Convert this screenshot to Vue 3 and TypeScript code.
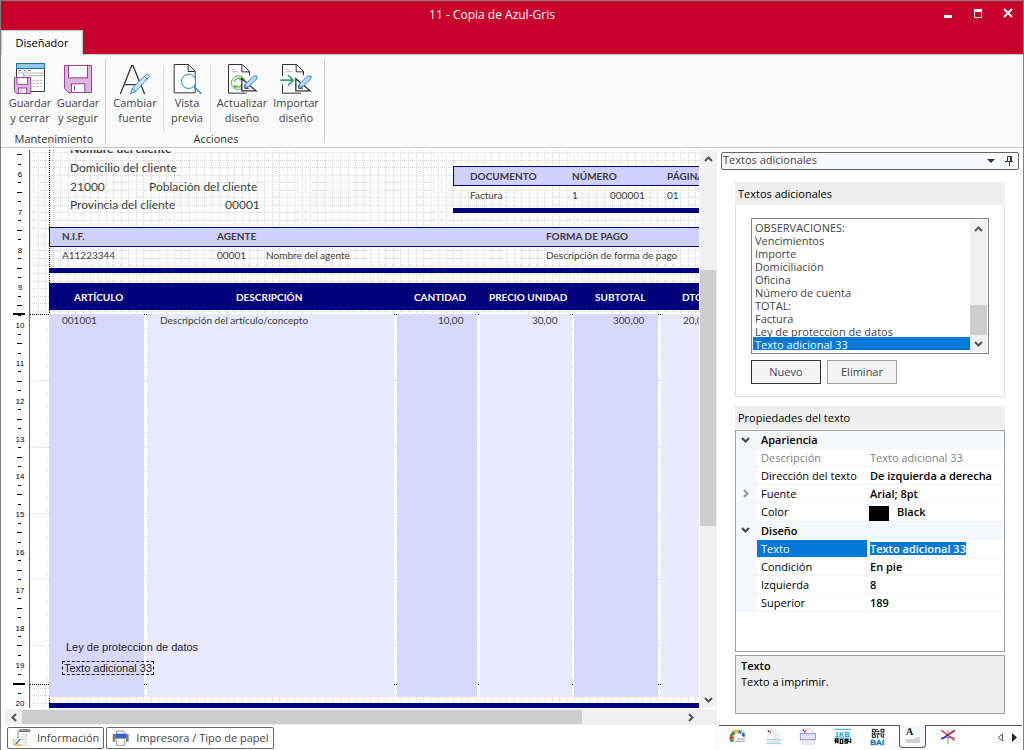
<script setup lang="ts">
import { ref } from 'vue'

interface CanvasText { x: number; y: number; t: string; k: string }

/* Ruler: one centimetre is 37.8 px on screen */
const CM = 37.8
const rulerLabels = Array.from({ length: 15 }, (_, i) => ({ n: i + 6, y: Math.round(23 + i * CM) }))
const ticks: { y: number; w: number }[] = []
for (let i = -3; i < 60; i++) {
  if (i % 4 === 0) continue
  ticks.push({ y: Math.round(23 + (i * CM) / 4), w: i % 2 === 0 ? 5 : 3 })
}
const gridV = Array.from({ length: 160 }, (_, i) => Math.round(i * 7.56))
const gridH = Array.from({ length: 22 }, (_, i) => Math.round(2 + i * 7.56))
const bandLines = [230, 297, 363, 429, 495]

const columns = [
  { x: 19, w: 95, k: 'dark' },
  { x: 117, w: 247, k: 'light' },
  { x: 367, w: 80, k: 'dark' },
  { x: 450, w: 92, k: 'light' },
  { x: 544, w: 84, k: 'dark' },
  { x: 631, w: 95, k: 'light' }
]

const texts: CanvasText[] = [
  { x: 40, y: -9, t: 'Nombre del cliente', k: 'big strong' },
  { x: 40, y: 10, t: 'Domicilio del cliente', k: 'big' },
  { x: 40, y: 29, t: '21000', k: 'big' },
  { x: 119, y: 29, t: 'Población del cliente', k: 'big' },
  { x: 40, y: 47, t: 'Provincia del cliente', k: 'big' },
  { x: 195, y: 47, t: '00001', k: 'big' },
  { x: 440, y: 18, t: 'DOCUMENTO', k: 'strong' },
  { x: 542, y: 18, t: 'NÚMERO', k: 'strong' },
  { x: 637, y: 18, t: 'PÁGINA', k: 'strong' },
  { x: 440, y: 37, t: 'Factura', k: '' },
  { x: 542, y: 37, t: '1', k: '' },
  { x: 580, y: 37, t: '000001', k: '' },
  { x: 637, y: 37, t: '01', k: '' },
  { x: 32, y: 78, t: 'N.I.F.', k: 'strong' },
  { x: 187, y: 78, t: 'AGENTE', k: 'strong' },
  { x: 516, y: 78, t: 'FORMA DE PAGO', k: 'strong' },
  { x: 32, y: 97, t: 'A11223344', k: '' },
  { x: 187, y: 97, t: '00001', k: '' },
  { x: 236, y: 97, t: 'Nombre del agente', k: '' },
  { x: 516, y: 97, t: 'Descripción de forma de pago', k: '' },
  { x: 44, y: 139, t: 'ARTÍCULO', k: 'strong white' },
  { x: 206, y: 139, t: 'DESCRIPCIÓN', k: 'strong white' },
  { x: 384, y: 139, t: 'CANTIDAD', k: 'strong white' },
  { x: 459, y: 139, t: 'PRECIO UNIDAD', k: 'strong white' },
  { x: 565, y: 139, t: 'SUBTOTAL', k: 'strong white' },
  { x: 652, y: 139, t: 'DTO.', k: 'strong white' },
  { x: 32, y: 162, t: '001001', k: '' },
  { x: 130, y: 162, t: 'Descripción del artículo/concepto', k: '' },
  { x: 408, y: 162, t: '10,00', k: '' },
  { x: 502, y: 162, t: '30,00', k: '' },
  { x: 583, y: 162, t: '300,00', k: '' },
  { x: 653, y: 162, t: '20,00', k: '' },
  { x: 36, y: 490, t: 'Ley de proteccion de datos', k: 'arial' },
  { x: 32, y: 511, t: 'Texto adicional 33', k: 'arial picked' }
]

const items = ['OBSERVACIONES:', 'Vencimientos', 'Importe', 'Domiciliación', 'Oficina', 'Número de cuenta', 'TOTAL:', 'Factura', 'Ley de proteccion de datos', 'Texto adicional 33']
const chosen = ref('Texto adicional 33')
const texto = ref('Texto adicional 33')
const paneTabs = ['color', 'pagina', 'cabecera', 'campos', 'qr', 'texto', 'lineas']
const pos = (o: { x: number; y: number }) => ({ left: o.x + 'px', top: o.y + 'px' })
</script>

<template>
  <div class="window">
    <header class="titlebar">
      <h1>11 - Copia de Azul-Gris</h1>
      <button class="tab" type="button">Diseñador</button>
      <div class="winbtns">
        <button type="button" aria-label="Minimizar"><svg width="10" height="12"><rect x="1" y="8" width="8" height="3" fill="#fff" /></svg></button>
        <button type="button" aria-label="Maximizar"><svg width="10" height="12"><path d="M1.500 2v8.500h7V2" fill="none" stroke="#fff" /><rect x="1" y="2" width="8" height="3" fill="#fff" /></svg></button>
        <button type="button" aria-label="Cerrar"><svg width="10" height="12"><path d="M1 2L9 10M9 2L1 10" stroke="#fff" stroke-width="2" /></svg></button>
      </div>
    </header>

    <nav class="ribbon">
      <section class="group">
        <div class="cmds">
          <button type="button" class="cmd w48">
            <svg width="34" height="34" viewBox="39 186 102 102">
              <path d="M49.500 205V274.500H133.500V205" fill="#fff" stroke="#3a3a3a" stroke-width="3" />
              <rect x="49.500" y="190.500" width="84" height="15" fill="#92c7ee" stroke="#1c71b5" stroke-width="3" />
              <path d="M56 212h8M72 212h8M84 212h9" stroke="#777" stroke-width="3" />
              <path d="M52 219h80M71 219v14M71 227h61" fill="none" stroke="#b4b4b4" stroke-width="3" />
              <path d="M97 241h31M97 250h31M97 259h31" stroke="#b4b4b4" stroke-width="3" stroke-dasharray="8 3" />
              <path d="M43.500 232.500H92.500V280.500H50L43.500 274Z" fill="#dcb6dc" stroke="#9d419a" stroke-width="3" />
              <rect x="51" y="233" width="32" height="20" fill="#fff" stroke="#9d419a" stroke-width="3" />
              <rect x="55" y="264" width="25" height="16" fill="#fff" stroke="#9d419a" stroke-width="3" />
              <path d="M63 268v8" stroke="#777" stroke-width="3" />
            </svg>
            <span>Guardar<br>y cerrar</span>
          </button>
          <button type="button" class="cmd w48">
            <svg width="34" height="34" viewBox="180 186 102 102">
              <path d="M190.500 196.500H271.500V277.500H202L190.500 266Z" fill="#dcb6dc" stroke="#9d419a" stroke-width="3" />
              <rect x="202.500" y="196.500" width="57" height="37" fill="#fff" stroke="#9d419a" stroke-width="3" />
              <rect x="211.500" y="251.500" width="40" height="26" fill="#fff" stroke="#9d419a" stroke-width="3" />
              <path d="M221 258v13" stroke="#555" stroke-width="3" />
            </svg>
            <span>Guardar<br>y seguir</span>
          </button>
        </div>
        <h2>Mantenimiento</h2>
      </section>
      <section class="group">
        <div class="cmds">
          <button type="button" class="cmd w56">
            <svg width="34" height="34" viewBox="350 186 102 102">
              <path d="M357 282L391 197H395L430 282M369 254H419" fill="none" stroke="#3a3a3a" stroke-width="4" />
              <path d="M388 281L393 264L434 224C438 220 447 226 442 232L403 274Z" fill="#cfe6f7" stroke="#3089cd" stroke-width="3" />
              <path d="M393 264L403 274M429 229L438 238" stroke="#3089cd" stroke-width="3" />
            </svg>
            <span>Cambiar<br>fuente</span>
          </button>
          <i class="sep"></i>
          <button type="button" class="cmd w46">
            <svg width="34" height="34" viewBox="508 186 102 102">
              <path d="M520.500 193.500H563L583.500 214V278.500H520.500Z" fill="#fff" stroke="#333" stroke-width="3" />
              <path d="M562.500 193.500V214.500H583.500" fill="none" stroke="#333" stroke-width="3" />
              <circle cx="564" cy="244" r="21.500" fill="#fff" stroke="#1d86ca" stroke-width="3" />
              <path d="M580 260L602 281" stroke="#1d86ca" stroke-width="4" />
            </svg>
            <span>Vista<br>previa</span>
          </button>
          <i class="sep"></i>
          <button type="button" class="cmd w62">
            <svg width="34" height="34" viewBox="675 186 102 102">
              <path d="M748 222V214L727 193.500H685.500V279.500H740" fill="#fff" stroke="#333" stroke-width="3" />
              <path d="M725.500 193.500V215.500H748.500V226" fill="none" stroke="#333" stroke-width="3" />
              <path d="M696 209h9M696 215h18" stroke="#bbb" stroke-width="3" />
              <circle cx="715" cy="248" r="20.500" fill="#fff" stroke="#4aa546" stroke-width="3" />
              <path d="M703 246C704 236 716 231 726 238V231M726 239H718M727 250C726 260 714 265 704 258V265M704 258H712" fill="none" stroke="#65b52e" stroke-width="4" />
              <path d="M725.500 236V272.500H768Z" fill="#fff" stroke="#333" stroke-width="4" />
              <path d="M734 255V265H746Z" fill="#fff" stroke="#333" stroke-width="3" />
              <path d="M733 264L738 250L761 228H771V236L747 259Z" fill="#b9dcf5" stroke="#3089cd" stroke-width="3" />
            </svg>
            <span>Actualizar<br>diseño</span>
          </button>
          <button type="button" class="cmd w46">
            <svg width="34" height="34" viewBox="834 186 102 102">
              <path d="M907 222V214L887 193.500H844.500V279.500H900" fill="#fff" stroke="#333" stroke-width="3" />
              <path d="M885.500 193.500V215.500H907.500V226" fill="none" stroke="#333" stroke-width="3" />
              <path d="M856 209h9M856 215h18" stroke="#bbb" stroke-width="3" />
              <path d="M844.500 228v25" stroke="#fff" stroke-width="4" />
              <path d="M838 240.500H876M861 225L877 240.500L861 256" fill="none" stroke="#2fa56a" stroke-width="5" />
              <path d="M884.500 236V272.500H927Z" fill="#fff" stroke="#333" stroke-width="4" />
              <path d="M893 255V265H905Z" fill="#fff" stroke="#333" stroke-width="3" />
              <path d="M892 264L897 250L920 228H930V236L906 259Z" fill="#b9dcf5" stroke="#3089cd" stroke-width="3" />
            </svg>
            <span>Importar<br>diseño</span>
          </button>
        </div>
        <h2>Acciones</h2>
      </section>
    </nav>

    <main class="work">
      <section class="designer">
        <div class="view">
          <svg class="ruler" aria-hidden="true">
            <text v-for="l in rulerLabels" :key="l.n" x="19" :y="l.y + 4">{{ l.n }}</text>
            <rect v-for="t in ticks" :key="t.y" :x="t.w === 5 ? 16 : 17" :y="t.y" :width="t.w" height="1" />
            <rect x="12" y="163" width="12" height="2" />
            <rect x="12" y="533" width="12" height="2" />
          </svg>
          <div class="canvas">
            <svg class="grid" width="100%" height="100%" aria-hidden="true">
              <g fill="none" stroke="#d6d6d6" stroke-dasharray="1 1">
                <line v-for="x in gridV" :key="'a' + x" :x1="x + .5" y1="0" :x2="x + .5" y2="164" />
                <line v-for="x in gridV" :key="'b' + x" :x1="x + .5" y1="535" :x2="x + .5" y2="558" />
                <line v-for="y in gridH" :key="'c' + y" x1="0" :y1="y + .5" x2="100%" :y2="y + .5" />
                <line v-for="y in [538, 545, 553]" :key="'d' + y" x1="0" :y1="y + .5" x2="100%" :y2="y + .5" />
                <line v-for="y in bandLines" :key="'e' + y" x1="0" :y1="y + .5" x2="100%" :y2="y + .5" />
                <line v-for="c in columns" :key="'f' + c.x" :x1="c.x - 1.500" y1="178" :x2="c.x - 1.500" y2="535" stroke-dasharray="1 12" />
              </g>
              <g stroke="#000" stroke-dasharray="1 1">
                <line x1="0" y1="164.500" x2="100%" y2="164.500" />
                <line x1="0" y1="534.500" x2="100%" y2="534.500" />
                <line x1="19.500" y1="0" x2="19.500" y2="100%" />
              </g>
            </svg>
            <div class="box doc"></div>
            <div class="bar docbar"></div>
            <div class="box nif"></div>
            <div class="bar nifbar"></div>
            <div class="bar head"></div>
            <div v-for="c in columns" :key="c.x" class="col" :class="c.k" :style="{ left: c.x + 'px', width: c.w + 'px' }"></div>
            <div class="bar footbar"></div>
            <span v-for="(o, i) in texts" :key="i" class="txt" :class="o.k" :style="pos(o)">{{ o.t }}</span>
          </div>
          <div class="vscroll">
            <button type="button" aria-label="Subir"><svg width="9" height="6"><path d="M1 5L4.500 1.500L8 5" /></svg></button>
            <i class="v1"></i><i class="thumb v2"></i><i class="v3"></i>
            <button type="button" aria-label="Bajar"><svg width="9" height="6"><path d="M1 1L4.500 4.500L8 1" /></svg></button>
          </div>
        </div>
        <div class="hscroll">
          <button type="button" aria-label="Izquierda"><svg width="6" height="9"><path d="M5 1L1.500 4.500L5 8" /></svg></button>
          <i class="thumb h1s"></i><i class="h2s"></i>
          <button type="button" aria-label="Derecha"><svg width="6" height="9"><path d="M1 1L4.500 4.500L1 8" /></svg></button>
          <i class="corner"></i>
        </div>
        <div class="foot">
          <button type="button">
            <svg width="18" height="18" viewBox="38 387 54 54">
              <path d="M53 415V395L59 389H88V395H82" fill="#fff" stroke="#808080" stroke-width="3" />
              <path d="M57 391H88V396H55Z" fill="#777" />
              <path d="M62 404h15M58 411h19M60 419h15M67 427h13M67 435h16M79 398v25" stroke="#bbb" stroke-width="2" />
              <path d="M38 417L56 435H38Z" fill="#fff" stroke="#e5a640" stroke-width="3" />
              <path d="M45 433L60 417" stroke="#3978a8" stroke-width="4" />
              <path d="M52 438h12v-8" fill="#f0b55a" />
            </svg>
            Información
          </button>
          <button type="button">
            <svg width="18" height="18" viewBox="334 388 54 54">
              <path d="M348 403V394H366L372 398V403" fill="#fff" stroke="#888" stroke-width="3" />
              <path d="M336 403H384V426H376V417H344V426H336Z" fill="#7c7c7c" />
              <rect x="345" y="402" width="31" height="12" fill="#2d62d8" />
              <path d="M348 420V437H372V420" fill="#fff" stroke="#999" stroke-width="3" />
            </svg>
            Impresora / Tipo de papel
          </button>
        </div>
      </section>

      <aside class="pane">
        <div class="panehead">
          <span>Textos adicionales</span>
          <button type="button" aria-label="Opciones"><svg width="8" height="4"><path d="M0 0H8L4 4Z" fill="#333" /></svg></button>
          <button type="button" aria-label="Anclar"><svg width="8" height="10"><path d="M2.500 5V.500H6.500V5M0 5.500H8M4.500 6V10" fill="none" stroke="#333" /><path d="M5 1h1v4H5z" fill="#333" /></svg></button>
        </div>
        <section class="card">
          <h3 id="lst">Textos adicionales</h3>
          <div class="cardbody">
            <div class="listwrap">
              <select v-model="chosen" size="10" aria-labelledby="lst">
                <option v-for="n in items" :key="n" :value="n">{{ n }}</option>
              </select>
              <div class="vscroll small">
                <button type="button" aria-label="Subir"><svg width="9" height="6"><path d="M1 5L4.500 1.500L8 5" /></svg></button>
                <i class="s1"></i><i class="thumb s2"></i>
                <button type="button" aria-label="Bajar"><svg width="9" height="6"><path d="M1 1L4.500 4.500L8 1" /></svg></button>
              </div>
            </div>
            <div class="btns">
              <button type="button" class="def">Nuevo</button>
              <button type="button">Eliminar</button>
            </div>
          </div>
        </section>

        <section class="props">
          <h3>Propiedades del texto</h3>
          <div class="gridbox">
            <table>
              <colgroup><col class="c1"><col class="c2"><col></colgroup>
              <tbody>
                <tr class="cat"><td><svg width="9" height="6"><path d="M1 1L4.500 4.500L8 1" /></svg></td><th colspan="2">Apariencia</th></tr>
                <tr class="off"><td></td><th>Descripción</th><td>Texto adicional 33</td></tr>
                <tr><td></td><th>Dirección del texto</th><td>De izquierda a derecha</td></tr>
                <tr><td><svg class="pale" width="9" height="9"><path d="M3 1L6.500 4.500L3 8" /></svg></td><th>Fuente</th><td>Arial; 8pt</td></tr>
                <tr><td></td><th>Color</th><td class="swatch"><i></i>Black</td></tr>
                <tr class="cat"><td><svg width="9" height="6"><path d="M1 1L4.500 4.500L8 1" /></svg></td><th colspan="2">Diseño</th></tr>
                <tr class="sel"><td></td><th><label for="tx">Texto</label></th><td><input id="tx" v-model="texto" type="text"></td></tr>
                <tr><td></td><th>Condición</th><td>En pie</td></tr>
                <tr><td></td><th>Izquierda</th><td>8</td></tr>
                <tr><td></td><th>Superior</th><td>189</td></tr>
              </tbody>
            </table>
          </div>
          <div class="help"><b>Texto</b><p>Texto a imprimir.</p></div>
        </section>

        <div class="strip">
          <button v-for="t in paneTabs" :key="t" type="button" :class="{ on: t === 'texto' }" :aria-label="t">
            <svg v-if="t === 'color'" width="18" height="18" viewBox="42 388 54 54">
              <path d="M49 427C45 412 52 399 66 399" fill="none" stroke="#e03a28" stroke-width="8" />
              <path d="M47 405L56 396L61 407L52 413Z" fill="#35a44a" /><path d="M56 393H70V403H58Z" fill="#f3c31b" />
              <path d="M70 393L82 396L77 407L69 403Z" fill="#3c8fe0" /><path d="M83 399L90 405L89 416L80 412Z" fill="#3667b8" />
              <rect x="46" y="413" width="10" height="9" fill="#e03a28" /><rect x="47" y="422" width="9" height="8" fill="#2fb34a" />
              <path d="M66 421h24M60 428h30" stroke="#999" stroke-width="3" />
            </svg>
            <svg v-else-if="t === 'pagina'" width="18" height="18" viewBox="147 386 54 54">
              <path d="M165 393H184L194 403V420H172" fill="#fafafa" stroke="#ddd" stroke-width="2" />
              <path d="M174 402h10M174 409h16M174 415h14" stroke="#ccc" stroke-width="2" />
              <path d="M159 394l9 7M168 394l-5 5" stroke="#d33" stroke-width="3" /><path d="M158 393h4v4h-4z" fill="#23c" />
              <path d="M154 421H198M154 433H198" stroke="#9fc8ef" stroke-width="3" /><rect x="156" y="423" width="40" height="8" fill="#e4e4e4" />
            </svg>
            <svg v-else-if="t === 'cabecera'" width="18" height="18" viewBox="252 385 54 54">
              <path d="M262 388H287L297 398V433H262Z" fill="#fafafa" stroke="#bbb" stroke-width="2" />
              <path d="M264 391l10 8M274 391l-6 8" stroke="#d33" stroke-width="3" /><path d="M263 390h4v4h-4z" fill="#23c" />
              <rect x="256" y="402" width="45" height="18" fill="#eeeefc" stroke="#8b8bf5" stroke-width="3" />
              <path d="M264 408h28M264 414h28M268 426h24" stroke="#bbb" stroke-width="2" stroke-dasharray="5 3" />
            </svg>
            <svg v-else-if="t === 'campos'" width="18" height="18" viewBox="357 384 54 54">
              <path d="M360 388H409M360 414H409" stroke="#2aa9df" stroke-width="3" />
              <text x="359" y="410" font-size="23" font-weight="bold" fill="#189fd8">1KB</text>
              <path d="M361 430V417h8v6h-7l9 7M376 430v-12h7v12zM388 418h8l-6 5h7v6h-9M399 418v7h9M407 416v14" fill="none" stroke="#111" stroke-width="4" />
            </svg>
            <svg v-else-if="t === 'qr'" width="18" height="18" viewBox="462 384 54 54">
              <path d="M472 388h9v8h-9zM498 388h9v8h-9zM472 404h9v8h-9z" fill="none" stroke="#111" stroke-width="3" />
              <path d="M486 387v12M491 392v9M484 402h25M486 408h6M497 408h12M470 400h13M502 412h6M488 412v3" stroke="#111" stroke-width="4" stroke-dasharray="4 2" />
              <text x="466" y="435" font-size="24" font-weight="bold" fill="#1173b8" stroke="#1173b8">BAI</text>
            </svg>
            <svg v-else-if="t === 'texto'" width="18" height="18" viewBox="567 386 54 54">
              <text class="serif" x="572" y="411" font-size="32" font-weight="bold" fill="#222">A</text>
              <path d="M600 419h15M573 425h42M573 431h42" stroke="#aaa" stroke-width="3" />
            </svg>
            <svg v-else width="18" height="18" viewBox="673 384 54 54">
              <path d="M700 389V431M679 413H722" stroke="#888" stroke-width="3" />
              <path d="M680 391L720 421" stroke="#e2202c" stroke-width="4" /><path d="M720 391L680 418" stroke="#2222dd" stroke-width="4" />
              <path d="M700 405L720 391" stroke="#e2202c" stroke-width="4" />
            </svg>
          </button>
          <span class="gap"></span>
          <button class="nav" type="button" aria-label="Anterior"><svg width="6" height="9"><path d="M5.500 1V8L1 4.500Z" fill="#fff" stroke="#555" /></svg></button>
          <button class="nav" type="button" aria-label="Siguiente"><svg width="6" height="9"><path d="M0 0V9L5 4.500Z" fill="#222" /></svg></button>
        </div>
      </aside>
    </main>
  </div>
</template>

<style>
body { background: #fff; overflow: hidden; }
</style>
<style scoped>
* { box-sizing: border-box; }
.window { height: 100vh; min-height: 700px; display: flex; flex-direction: column; border: 1px solid #808080; border-bottom: 0; font: 11px/15px "Open Sans", "Noto Sans", sans-serif; color: #444; background: #fff; }
button { font: inherit; color: inherit; border: 0; background: none; padding: 0; }
h1, h2, h3, p { margin: 0; font: inherit; }
.titlebar { display: grid; grid-template-columns: 1fr auto 1fr; height: 54px; background: #c8002c; color: #fff; border-bottom: 1px solid #c6c6c6; flex: none; }
.titlebar h1 { grid-column: 2; grid-row: 1; padding-top: 6px; margin-right: 40px; font-size: 12px; line-height: 16px; }
.titlebar .tab { grid-column: 1; grid-row: 1; justify-self: start; align-self: end; width: 82px; height: 25px; margin: 0 0 -1px; padding-bottom: 2px; background: #fafafa; color: #000; border: 1px solid #c6c6c6; border-bottom: 0; }
.winbtns { grid-column: 3; grid-row: 1; justify-self: end; display: flex; gap: 20px; padding: 4px 10px 0 0; height: 20px; }
.winbtns button, .winbtns svg { display: block; }
.ribbon { height: 93px; display: flex; background: #fafafa; border-bottom: 1px solid #c6c6c6; flex: none; }
.group { display: flex; flex-direction: column; align-items: center; border-right: 1px solid #ccc; margin: 4px 0; padding: 0 3px 0 5px; }
.group + .group { padding: 0 5px 0 1px; }
.group + .group h2 { padding-left: 6px; }
.cmds { display: flex; flex: 1; }
.cmd { display: flex; flex-direction: column; align-items: center; justify-content: flex-start; padding-top: 3px; }
.cmd svg { display: block; flex: none; }
.cmd span { white-space: nowrap; margin-top: -1px; }
.w48 { width: 48px; } .w56 { width: 56px; } .w46 { width: 46px; } .w62 { width: 62px; }
.sep { width: 1px; background: #ddd; margin: 6px 0 2px; }
.group h2 { color: #333; line-height: 9px; }
.work { flex: 1; min-height: 0; display: flex; }
.designer { flex: 1; min-width: 0; display: flex; flex-direction: column; padding-top: 2px; }
.view { flex: 1; min-height: 0; display: flex; }
.ruler { width: 29px; height: 100%; border-right: 1px solid #666; flex: none; overflow: hidden; }
.ruler text { font: 8px "Liberation Sans", Arial, sans-serif; text-anchor: middle; }
.canvas { position: relative; flex: 1; min-width: 0; overflow: hidden; }
.grid { position: absolute; inset: 0; }
.box { position: absolute; right: -2px; height: 20px; background: #d0d0ff; border: 1px solid #00007c; }
.bar { position: absolute; right: 0; left: 19px; height: 5px; background: #00007c; }
.doc { left: 423px; top: 16px; }
.docbar { left: 423px; top: 58px; }
.nif { left: 19px; top: 77px; }
.nifbar { top: 118px; }
.head { top: 133px; height: 27px; }
.footbar { top: 553px; }
.col { position: absolute; top: 164px; height: 383px; }
.dark { background: #d8d8ff; }
.light { background: #e8e8ff; }
.txt { position: absolute; font: 10px/16px Lato, sans-serif; font-variant-ligatures: none; white-space: nowrap; color: #3c3c3c; }
.big { font-size: 12px; }
.strong { font-weight: bold; }
.white { color: #fff; }
.arial { font: 11px/14px "Liberation Sans", Arial, sans-serif; color: #222; }
.picked { border: 1px dashed #000; line-height: 12px; padding: 0 1px; }
.vscroll { width: 16px; background: #f0f0f0; display: flex; flex-direction: column; margin-left: 1px; flex: none; }
.vscroll button, .hscroll button { flex: none; width: 16px; height: 17px; display: flex; align-items: center; justify-content: center; }
.vscroll path, .hscroll path { fill: none; stroke: #555; stroke-width: 2; }
.thumb { background: #cdcdcd; }
.v1 { flex: 103; } .v2 { flex: 256; } .v3 { flex: 165; }
.s1 { flex: 1; } .s2 { height: 30px; }
.hscroll { height: 17px; margin: 0 0 0 4px; padding: 1px 0; background: #f0f0f0; display: flex; border-top: 1px solid #fff; flex: none; }
.hscroll button { height: 15px; width: 17px; }
.h1s { flex: 560; } .h2s { flex: 100; }
.corner { width: 17px; }
.foot { display: flex; gap: 2px; padding: 2px 0 2px 6px; height: 25px; flex: none; }
.foot button { display: flex; align-items: center; gap: 6px; height: 22px; padding: 0 4px 0 5px; border: 1px solid #666; border-radius: 2px; background: #fff; white-space: nowrap; line-height: 20px; }
.pane { width: 307px; flex: none; display: flex; flex-direction: column; border-left: 1px solid #f0f0f0; }
.panehead { display: flex; align-items: center; height: 18px; margin: 4px 4px 0; padding: 0 5px 0 1px; border: 1px solid #666; border-radius: 2px; background: #f8f8ff; gap: 10px; flex: none; }
.panehead span { flex: 1; line-height: 14px; padding-bottom: 2px; }
.panehead button, .panehead svg { display: block; }
.card { margin: 12px 18px 0; }
h3 { height: 23px; line-height: 23px; padding-left: 3px; background: #eee; color: #000; }
.cardbody { border: 1px solid #ddd; border-top: 0; height: 192px; padding: 13px 15px 0; }
.listwrap { display: flex; border: 1px solid #828790; padding: 1px; height: 136px; }
.small { margin: 0; width: 17px; }
select { appearance: none; flex: 1; min-width: 0; height: 132px; margin: 0; padding: 0; border: 0; outline: 0; overflow: hidden; font: inherit; color: #444; background: #fff; border-radius: 0; }
option { min-height: 13px; height: 13px; line-height: 11px; padding: 0 2px; }
option:checked { background: #0078d7 linear-gradient(#0078d7, #0078d7); color: #fff; -webkit-text-fill-color: #fff; }
.btns { display: flex; gap: 6px; padding-top: 6px; }
.btns button { width: 70px; height: 24px; padding-bottom: 2px; border: 1px solid #a0a0a0; background: #f4f4f4; }
.btns .def { border-color: #333; }
.props { flex: 1; min-height: 0; display: flex; flex-direction: column; margin: 9px 18px 11px; }
.props h3 { flex: none; margin-bottom: 1px; }
.gridbox { flex: 1; min-height: 0; border: 1px solid #a0a0a0; }
table { width: 100%; border-collapse: separate; border-spacing: 0; table-layout: fixed; color: #000; }
.c1 { width: 21px; } .c2 { width: 110px; }
td, th { height: 18px; padding: 0 0 0 4px; text-align: left; font-weight: normal; line-height: 17px; border-bottom: 1px solid #f2f5fa; white-space: nowrap; }
td:first-child { padding: 0 0 0 5px; background: #f4f7fc; }
td:last-child { font-weight: 600; border-left: 1px solid #f2f5fa; padding-left: 2px; }
.cat td, .cat th { background: #f4f7fc; }
.cat th { font-weight: 600; }
.off th, .off td:last-child { color: #808080; font-weight: normal; }
.sel th { background: #0078d7; color: #fff; }
table svg { display: block; }
table path { fill: none; stroke: #444; stroke-width: 2; }
table .pale path { stroke: #999; }
td.swatch:last-child { padding-left: 1px; }
.swatch i { display: inline-block; width: 20px; height: 15px; background: #000; vertical-align: middle; margin-right: 8px; }
input { display: block; border: 0; padding: 0; margin: 0; height: 13px; font: 600 11px/13px "Open Sans", sans-serif; background: #0078d7; color: #fff; border-radius: 0; field-sizing: content; }
.help { height: 59px; margin-top: 3px; padding: 2px 5px; border: 1px solid #a0a0a0; background: #eee; color: #000; flex: none; }
.help b { display: block; line-height: 16px; font-weight: 600; }
.help p { line-height: 16px; }
.strip { display: flex; height: 25px; margin: 0 1px 0 2px; border-top: 1px solid #555; flex: none; padding-left: 1px; }
.strip button { width: 35px; height: 22px; display: flex; align-items: center; justify-content: center; }
.strip .on { width: 27px; margin: -1px 4px 0; height: 23px; border: 1px solid #555; border-top: 0; border-radius: 0 0 4px 4px; background: #f8f8ff; }
.strip text { font-family: "Liberation Sans", Arial, sans-serif; }
.strip .serif { font-family: "Liberation Serif", serif; }
.gap { flex: 1; }
.strip .nav { width: 15px; }
</style>
